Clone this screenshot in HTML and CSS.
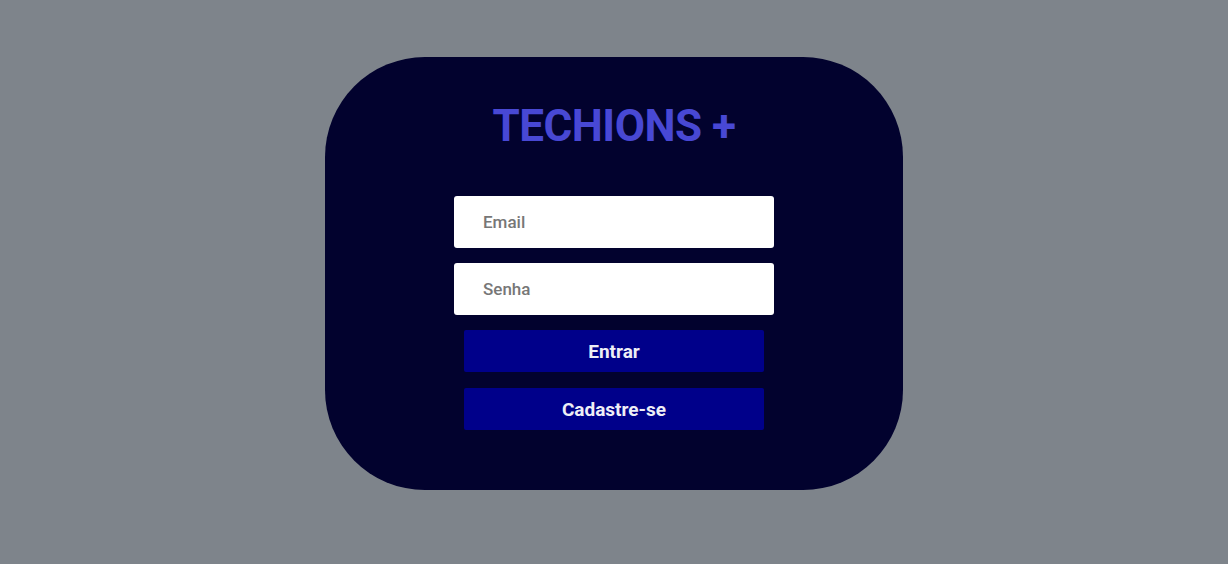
FILE: index.html
```html
<!DOCTYPE html>
<html lang="pt-BR">
<head>
    <meta charset="UTF-8">
    <meta name="viewport" content="width=device-width, initial-scale=1.0">
    <title>Techions +</title>
    <link rel="stylesheet" href="styles.css">
</head>
<body>
<div class="login-card">
    <h1 class="logo">TECHIONS +</h1>

    <form class="login-form">
        <input class="field" type="email" placeholder="Email">
        <input class="field" type="password" placeholder="Senha">
        <button class="btn" type="submit">Entrar</button>
        <button class="btn" type="button">Cadastre-se</button>
    </form>
</div>
</body>
</html>
```

FILE: styles.css
```css
body {
    margin: 0;
    background-color: #7e848b;
    font-family: Roboto, "Liberation Sans", sans-serif;
    display: flex;
    justify-content: center;
    padding-top: 57px;
}

.login-card {
    width: 578px;
    height: 433px;
    box-sizing: border-box;
    background-color: #02022e;
    border-radius: 100px;
    display: flex;
    flex-direction: column;
    align-items: center;
    padding-top: 47px;
}

.logo {
    margin: 0;
    font-size: 44px;
    line-height: 45px;
    font-weight: 700;
    letter-spacing: -0.5px;
    color: #4848d4;
}

.login-form {
    display: flex;
    flex-direction: column;
    align-items: center;
    margin-top: 47px;
}

.field {
    width: 320px;
    height: 52px;
    box-sizing: border-box;
    border: none;
    border-radius: 3px;
    padding: 0 29px;
    margin-bottom: 15px;
    font-family: inherit;
    font-size: 17px;
    font-weight: 500;
    color: #333;
    background: #fff;
}

.field::placeholder {
    color: #777;
}

.btn {
    width: 300px;
    height: 42px;
    border: none;
    border-radius: 2px;
    background-color: #00008a;
    color: #eeeef6;
    font-family: inherit;
    font-size: 19px;
    font-weight: 700;
    margin-bottom: 16px;
    cursor: pointer;
}
```
